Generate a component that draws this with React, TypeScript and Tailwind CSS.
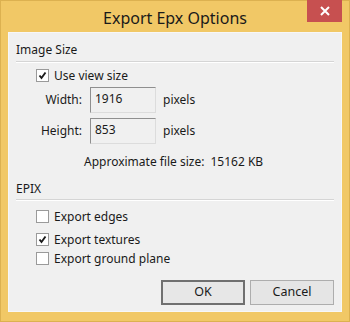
import React from 'react';

const Check: React.FC<{ checked?: boolean }> = ({ checked }) => (
  <div className="w-[13px] h-[13px] border border-[#9a9a9a] bg-white flex items-center justify-center shrink-0">
    {checked && (
      <svg width="9" height="9" viewBox="0 0 9 9">
        <path d="M1.5 4.5 L3.5 7 L7.5 1.5" fill="none" stroke="#1a1a1a" strokeWidth="1.9" />
      </svg>
    )}
  </div>
);

const CheckRow: React.FC<{ label: string; checked?: boolean; className?: string }> = ({ label, checked, className }) => (
  <div className={`h-[17px] flex items-center pl-[27px] ${className ?? ''}`}>
    <Check checked={checked} />
    <span className="ml-[5px]">{label}</span>
  </div>
);

const Separator: React.FC<{ className?: string }> = ({ className }) => (
  <div className={`mx-[7px] h-px bg-[#d5d5d5] border-b border-white box-content ${className ?? ''}`} />
);

const SizeRow: React.FC<{ label: string; value: string; className?: string }> = ({ label, value, className }) => (
  <div className={`flex items-center ${className ?? ''}`}>
    <span className="w-[73px] text-right">{label}</span>
    <div className="ml-[8px] w-[66px] h-[26px] border border-t-[#8f8f8f] border-l-[#8f8f8f] border-b-[#dcdcdc] border-r-[#dcdcdc] bg-[#f0f0f0] px-[4px] pt-[2px] self-stretch">
      {value}
    </div>
    <span className="ml-[7px]">pixels</span>
  </div>
);

const App: React.FC = () => {
  return (
    <div
      className="w-[350px] h-[322px] bg-[#f1c866] border border-[#dcb150] flex flex-col text-[12px] text-[#1a1a1a]"
      style={{ fontFamily: '"Noto Sans", "Open Sans", sans-serif' }}
    >
      {/* title bar */}
      <div className="relative h-[31px] flex items-center justify-center">
        <span className="text-[16px] text-[#1a1a1a] mt-[2px]">Export Epx Options</span>
        <div className="absolute top-[-1px] right-[7px] w-[35px] h-[22px] bg-[#c75050] flex items-center justify-center">
          <svg width="10" height="10" viewBox="0 0 10 10">
            <path d="M1 1 L9 9 M9 1 L1 9" stroke="white" strokeWidth="2" />
          </svg>
        </div>
      </div>

      {/* client area */}
      <div className="mx-[7px] h-[280px] bg-[#f0f0f0] border border-[#f7f7f7] flex flex-col">
        <div className="mt-[8px] h-[18px] flex items-center pl-[7px]">Image Size</div>
        <Separator className="mt-[2px]" />
        <CheckRow label="Use view size" checked className="mt-[4px]" />
        <SizeRow label="Width:" value="1916" className="mt-[3px] h-[26px]" />
        <SizeRow label="Height:" value="853" className="mt-[5px] h-[25px]" />
        <div className="mt-[11px] h-[16px] flex items-center pl-[75px]">
          <span>Approximate file size:</span>
          <span className="ml-[6px]">15162 KB</span>
        </div>
        <div className="mt-[10px] h-[18px] flex items-center pl-[7px]">EPIX</div>
        <Separator className="mt-px" />
        <CheckRow label="Export edges" className="mt-[7px]" />
        <CheckRow label="Export textures" checked className="mt-[6px]" />
        <CheckRow label="Export ground plane" className="mt-[2px]" />
        <div className="mt-[13px] flex justify-end gap-[5px] pr-[7px]">
          <button className="w-[84px] h-[25px] border-2 border-[#707070] bg-[#e7e7e7] text-[12.5px]">OK</button>
          <button className="w-[84px] h-[25px] border border-[#adadad] bg-[#e5e5e5] text-[12.5px]">Cancel</button>
        </div>
      </div>
    </div>
  );
};

export default App;
